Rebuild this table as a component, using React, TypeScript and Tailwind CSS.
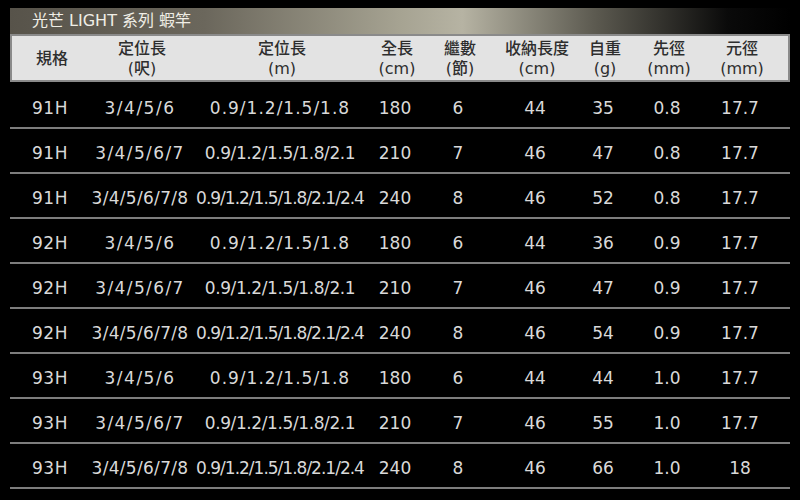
import React from 'react'

const cols = 'grid grid-cols-[80px_100px_180px_50px_76px_78px_58px_70px_76px_1fr]'

const heads: [string, string][] = [
  ['規格', ''],
  ['定位長', '(呎)'],
  ['定位長', '(m)'],
  ['全長', '(cm)'],
  ['繼數', '(節)'],
  ['收納長度', '(cm)'],
  ['自重', '(g)'],
  ['先徑', '(mm)'],
  ['元徑', '(mm)'],
]

type Row = { model: string; ft: string; m: string; len: string; sec: string; pack: string; wt: string; tip: string; butt: string }

const rows: Row[] = [
  { model: '91H', ft: '3/4/5/6', m: '0.9/1.2/1.5/1.8', len: '180', sec: '6', pack: '44', wt: '35', tip: '0.8', butt: '17.7' },
  { model: '91H', ft: '3/4/5/6/7', m: '0.9/1.2/1.5/1.8/2.1', len: '210', sec: '7', pack: '46', wt: '47', tip: '0.8', butt: '17.7' },
  { model: '91H', ft: '3/4/5/6/7/8', m: '0.9/1.2/1.5/1.8/2.1/2.4', len: '240', sec: '8', pack: '46', wt: '52', tip: '0.8', butt: '17.7' },
  { model: '92H', ft: '3/4/5/6', m: '0.9/1.2/1.5/1.8', len: '180', sec: '6', pack: '44', wt: '36', tip: '0.9', butt: '17.7' },
  { model: '92H', ft: '3/4/5/6/7', m: '0.9/1.2/1.5/1.8/2.1', len: '210', sec: '7', pack: '46', wt: '47', tip: '0.9', butt: '17.7' },
  { model: '92H', ft: '3/4/5/6/7/8', m: '0.9/1.2/1.5/1.8/2.1/2.4', len: '240', sec: '8', pack: '46', wt: '54', tip: '0.9', butt: '17.7' },
  { model: '93H', ft: '3/4/5/6', m: '0.9/1.2/1.5/1.8', len: '180', sec: '6', pack: '44', wt: '44', tip: '1.0', butt: '17.7' },
  { model: '93H', ft: '3/4/5/6/7', m: '0.9/1.2/1.5/1.8/2.1', len: '210', sec: '7', pack: '46', wt: '55', tip: '1.0', butt: '17.7' },
  { model: '93H', ft: '3/4/5/6/7/8', m: '0.9/1.2/1.5/1.8/2.1/2.4', len: '240', sec: '8', pack: '46', wt: '66', tip: '1.0', butt: '18' },
]

// spacing per text length, the source squeezes the long ones
function ftTrack(s: string) {
  if (s.length <= 7) return 'tracking-[1.5px]'
  if (s.length <= 9) return 'tracking-[1.4px]'
  return 'tracking-[0.3px]'
}

function mTrack(s: string) {
  if (s.length <= 15) return 'tracking-[1px]'
  if (s.length <= 19) return 'tracking-[-0.4px]'
  return 'tracking-[-1px]'
}

export default function App() {
  return (
    <div
      className="h-[500px] w-[800px] overflow-hidden bg-black pt-[8px] pl-[10px] pr-[10px]"
      style={{ fontFamily: '"DejaVu Sans", "Noto Sans CJK TC", sans-serif' }}
    >
      <div className="flex h-[26px] items-center bg-[linear-gradient(90deg,#57534a_0%,#6b675c_25%,#a6a392_50%,#b6b3a3_58%,#5c5a50_75%,#0a0a0a_92%,#000_100%)] pl-[22px] text-[16px] text-[#f0eee6]">
        光芒 LIGHT 系列 蝦竿
      </div>
      <div className={`${cols} h-[48px] items-center border-2 border-[#8a8a8a] bg-[#e3e3e3] pt-[1px] text-[16px] leading-[20px] text-[#2e2e2e]`}>
        {heads.map(([a, b], i) => (
          <div key={i} className="flex flex-col items-center text-center font-medium">
            <span>{a}</span>
            {b && <span>{b}</span>}
          </div>
        ))}
      </div>
      <div className="mt-[2px] text-[17px] text-[#d9d9d9]">
        {rows.map((r, i) => (
          <div key={i} className={`${cols} h-[45px] items-center border-b-2 border-[#7d7d7d] pt-[6px]`}>
            <div className="text-center tracking-[0.5px]">{r.model}</div>
            <div className={`text-center ${ftTrack(r.ft)}`}>{r.ft}</div>
            <div className={`text-center ${mTrack(r.m)}`}>{r.m}</div>
            <div className="text-center">{r.len}</div>
            <div className="text-center">{r.sec}</div>
            <div className="text-center">{r.pack}</div>
            <div className="text-center">{r.wt}</div>
            <div className="text-center">{r.tip}</div>
            <div className="text-center">{r.butt}</div>
            <div />
          </div>
        ))}
      </div>
    </div>
  )
}
